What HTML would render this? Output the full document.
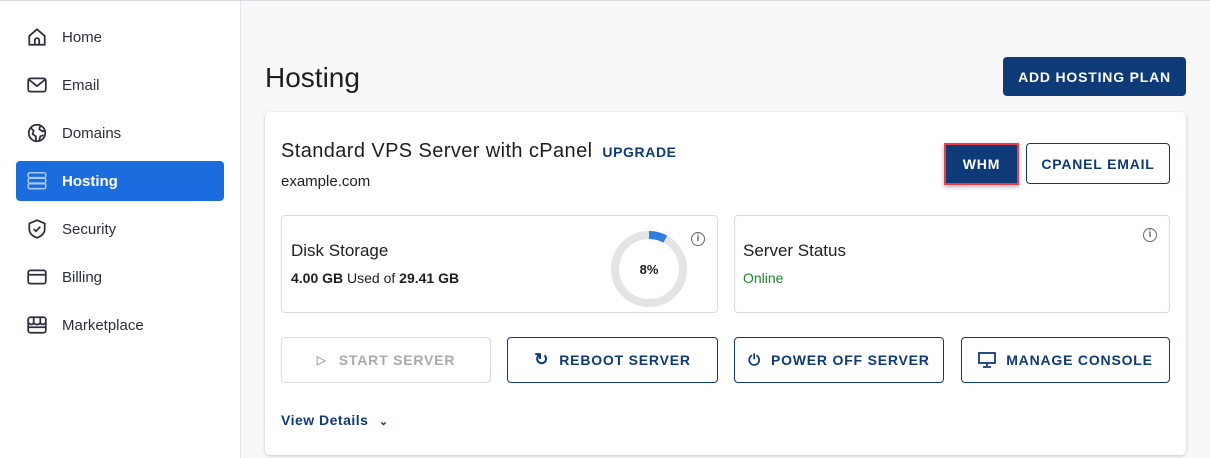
<!DOCTYPE html>
<html><head><style>
*{box-sizing:border-box;margin:0;padding:0}
body{width:1210px;height:458px;overflow:hidden;font-family:"Liberation Sans",sans-serif;background:#f8f8f8;position:relative;color:#1e1e1e}
.top{position:absolute;left:0;top:0;width:1210px;height:1px;background:#d6d9de}
.side{position:absolute;left:0;top:1px;width:241px;height:457px;background:#fff;border-right:1px solid #e2e4e8}
.it{position:absolute;left:16px;width:208px;height:40px;border-radius:4px;display:flex;align-items:center;font-size:15px;color:#2a2f3a}
.it svg{position:absolute;left:10px;top:9px}
.it span{position:absolute;left:46px}
.it.act{background:#1b6ddd;color:#fff;font-weight:bold}
h1{position:absolute;left:265px;top:62px;font-size:28px;font-weight:normal;color:#1e1e1e}
.btn{position:absolute;display:flex;align-items:center;justify-content:center;font-weight:bold;font-size:14px;letter-spacing:.8px;border-radius:4px}
.pri{background:#0f3a78;color:#fff}
.out{border:1px solid #0f3a78;color:#0f3a78;background:#fff}
.card{position:absolute;left:265px;top:112px;width:921px;height:343px;background:#fff;border-radius:5px;box-shadow:0 1px 3px rgba(0,0,0,.2)}
.panel{position:absolute;border:1px solid #dcdcdc;border-radius:4px;background:#fff}
.info{position:absolute;width:14px;height:14px;border:1.5px solid #666;border-radius:50%;font-size:10px;color:#666;text-align:center;line-height:11px;font-weight:bold}
</style></head><body>
<div class="top"></div>
<div class="side">
<div class="it" style="top:16px"><svg width="22" height="22" viewBox="0 0 20 20" fill="none" stroke="#2a2f3a" stroke-width="1.6"><path d="M3 9L10 3l7 6v8H3z"/><path d="M8 17v-4a2 2 0 014 0v4"/></svg><span>Home</span></div>
<div class="it" style="top:64px"><svg width="22" height="22" viewBox="0 0 20 20" fill="none" stroke="#2a2f3a" stroke-width="1.6"><rect x="2" y="4" width="16" height="12" rx="2"/><path d="M2.5 5l7.5 6 7.5-6"/></svg><span>Email</span></div>
<div class="it" style="top:112px"><svg width="22" height="22" viewBox="0 0 20 20" fill="none" stroke="#2a2f3a" stroke-width="1.6"><circle cx="10" cy="10" r="7.5"/><path d="M4 5l3 3-1 3 3 2v4M13 3.5l-1 3 3 2 2.5-1M12 17l1-4 3-1"/></svg><span>Domains</span></div>
<div class="it act" style="top:160px"><svg width="22" height="22" viewBox="0 0 20 20" fill="none" stroke="#a9c8f3" stroke-width="1.4"><rect x="2" y="2.5" width="16" height="4.5" rx="1.5"/><rect x="2" y="7.5" width="16" height="4.5" rx="1.5"/><rect x="2" y="12.5" width="16" height="4.5" rx="1.5"/></svg><span>Hosting</span></div>
<div class="it" style="top:208px"><svg width="22" height="22" viewBox="0 0 20 20" fill="none" stroke="#2a2f3a" stroke-width="1.6"><path d="M10 2l7 3v5c0 4-3 6.5-7 8-4-1.5-7-4-7-8V5z"/><path d="M7 10l2 2 4-4"/></svg><span>Security</span></div>
<div class="it" style="top:256px"><svg width="22" height="22" viewBox="0 0 20 20" fill="none" stroke="#2a2f3a" stroke-width="1.6"><rect x="2" y="4" width="16" height="12" rx="2"/><path d="M2 8h16"/></svg><span>Billing</span></div>
<div class="it" style="top:304px"><svg width="22" height="22" viewBox="0 0 20 20" fill="none" stroke="#2a2f3a" stroke-width="1.6"><rect x="2" y="3" width="16" height="14" rx="2"/><path d="M2 8c2 2 4 2 5 0 1 2 5 2 6 0 1 2 3 2 5 0M7 3v5M13 3v5M2 12h16"/></svg><span>Marketplace</span></div>
</div>
<h1>Hosting</h1>
<div class="btn pri" style="left:1003px;top:57px;width:183px;height:39px">ADD HOSTING PLAN</div>
<div class="card">
<div style="position:absolute;left:16px;top:28px;font-size:20px;color:#1e1e1e;letter-spacing:.4px">Standard VPS Server with cPanel <span style="font-size:14px;font-weight:bold;color:#0f3a78;letter-spacing:.6px;margin-left:4px">UPGRADE</span></div>
<div style="position:absolute;left:16px;top:61px;font-size:15px">example.com</div>
<div class="btn pri" style="left:679px;top:31px;width:75px;height:42px;border:2px solid #e8404a;border-radius:0;box-shadow:0 2px 4px rgba(0,0,0,.3)">WHM</div>
<div class="btn out" style="left:761px;top:31px;width:144px;height:41px">CPANEL EMAIL</div>
<div class="panel" style="left:16px;top:103px;width:437px;height:98px">
<div style="position:absolute;left:9px;top:25px;font-size:17px">Disk Storage</div>
<div style="position:absolute;left:9px;top:54px;font-size:14px"><b>4.00 GB</b> Used of <b>29.41 GB</b></div>
<svg style="position:absolute;left:327px;top:13px" width="80" height="80" viewBox="0 0 80 80"><circle cx="40" cy="40" r="34" fill="none" stroke="#e4e4e4" stroke-width="8"/><circle cx="40" cy="40" r="34" fill="none" stroke="#2f7de1" stroke-width="8" stroke-dasharray="17 300" transform="rotate(-90 40 40)"/><text x="40" y="45" text-anchor="middle" font-size="13" font-weight="bold" font-family="Liberation Sans" fill="#1e1e1e">8%</text></svg>
<div class="info" style="left:409px;top:16px">i</div>
</div>
<div class="panel" style="left:469px;top:103px;width:436px;height:98px">
<div style="position:absolute;left:8px;top:25px;font-size:17px">Server Status</div>
<div style="position:absolute;left:8px;top:54px;font-size:14px;color:#21872b">Online</div>
<div class="info" style="left:408px;top:12px">i</div>
</div>
<div class="btn" style="left:16px;top:225px;width:210px;height:46px;border:1px solid #dcdcdc;color:#aaa"><span style="font-size:12px;margin-right:12px">▷</span>START SERVER</div>
<div class="btn out" style="left:242px;top:225px;width:211px;height:46px"><span style="font-size:17px;margin-right:10px">↻</span>REBOOT SERVER</div>
<div class="btn out" style="left:469px;top:225px;width:210px;height:46px"><span style="font-size:15px;margin-right:10px">⏻</span>POWER OFF SERVER</div>
<div class="btn out" style="left:696px;top:225px;width:209px;height:46px"><svg width="18" height="16" viewBox="0 0 18 16" fill="none" stroke="#0f3a78" stroke-width="1.8" style="margin-right:10px"><rect x="1" y="1" width="16" height="10"/><path d="M9 11v3M5 15h8"/></svg>MANAGE CONSOLE</div>
<div style="position:absolute;left:16px;top:300px;font-size:14px;font-weight:bold;color:#0f3a78;letter-spacing:.5px">View Details <span style="font-size:11px;margin-left:6px">⌄</span></div>
</div>
</body></html>
